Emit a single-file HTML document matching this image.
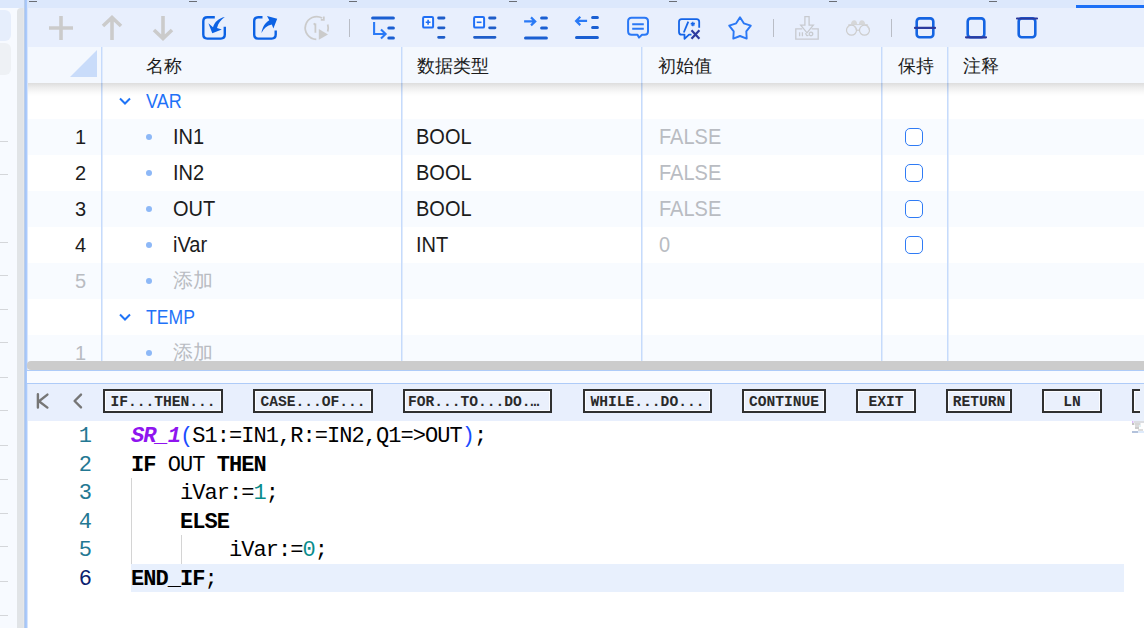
<!DOCTYPE html>
<html><head><meta charset="utf-8">
<style>
*{margin:0;padding:0;box-sizing:border-box}
html,body{width:1144px;height:628px;overflow:hidden;background:#fff;font-family:"Liberation Sans",sans-serif}
.a{position:absolute}
#topstrip{left:0;top:0;width:1144px;height:8px;background:#dce8fc}
.dash{top:1px;width:8px;height:1px;background:#6a6e75}
#uline{left:1076px;top:5px;width:68px;height:3px;background:#1c70f7}
#leftp{left:0;top:8px;width:25px;height:620px;background:#f7faff}
#vline{left:24px;top:0;width:4px;height:628px;z-index:9;background:linear-gradient(to right,#b9cde9 0 1px,#a6c5f6 1px 2px,#abcafc 2px 3px,#d6e5fc 3px 4px)}
#sb{left:17px;top:8px;width:7px;height:620px;background:linear-gradient(to right,#e1e4e7 0 6px,#e6e7ea 6px 7px);border-radius:4px 0 0 0}
.tick{left:0;width:8px;height:1px;background:#d4d6da}
#tb{left:27px;top:8px;width:1117px;height:39px;background:#e8effd}
#hdr{left:27px;top:47px;width:1117px;height:36px;background:#f4f8fe;z-index:2}
.row{left:27px;width:1117px;height:36px}
.lt{background:#f8fbff}
.col{top:47px;width:2px;height:314px;background:linear-gradient(to right,#c6dbfc 50%,#e0ebfc 50%);z-index:3}
.t{font-size:20px;line-height:20px;color:#1c1c1c;white-space:nowrap}
.lat{font-size:22px;transform:scaleX(0.909);transform-origin:0 0}
.cjk{font-size:18px}
#split{left:26.5px;top:361px;width:1118px;height:9px;background:#cccccc;border-radius:4px 0 0 4px;z-index:10}
#gap{left:27px;top:370px;width:1117px;height:14px;z-index:10;background:#f9fbff;border-top:1px solid #aecbf8;border-bottom:1px solid #aecbf8}
#ctb{left:27px;top:384px;width:1117px;height:37px;background:#e8effd}
.btn{top:389px;height:24px;border:2px solid #303030;background:#eaf0fc;font-family:"Liberation Mono",monospace;font-weight:bold;font-size:14.6px;line-height:22px;color:#2a2a2a;text-align:center;white-space:nowrap;overflow:hidden;text-overflow:ellipsis;padding:0 3px;box-shadow:inset 0 0 0 1px rgba(255,255,255,0.85)}
#code{left:27px;top:421px;width:1117px;height:207px;background:#fff}
.ln{left:40px;padding-top:2px;width:51px;text-align:right;font-family:"Liberation Mono",monospace;font-size:22px;letter-spacing:-0.95px;height:28.6px;line-height:28.6px;color:#237893}
.cl{left:131px;padding-top:2px;font-family:"Liberation Mono",monospace;font-size:22px;letter-spacing:-0.95px;height:28.6px;line-height:28.6px;color:#000;white-space:pre}
.num{left:40px;width:46px;text-align:right}
.gr{color:#b9bcc2}
.dot{left:146px;width:6px;height:6px;border-radius:3px;background:#8db8f7}
.cb{left:905px;width:18px;height:18px;border:1.5px solid #2f7bf5;border-radius:5px;background:#fff}
</style></head><body>
<div id="topstrip" class="a"></div>
<div class="a dash" style="left:29px"></div>
<div class="a dash" style="left:189px"></div>
<div class="a dash" style="left:349px"></div>
<div class="a dash" style="left:509px"></div>
<div class="a dash" style="left:669px"></div>
<div class="a dash" style="left:829px"></div>
<div class="a dash" style="left:989px"></div>
<div id="uline" class="a"></div>

<div id="leftp" class="a"></div>
<div class="a" style="left:0;top:10px;width:11px;height:31px;background:#e6eefc;border-radius:0 6px 6px 0"></div>
<div class="a" style="left:0;top:43px;width:11px;height:32px;background:#eef1f5;border-radius:0 6px 6px 0"></div>
<div class="a tick" style="top:141px"></div><div class="a tick" style="top:174px"></div><div class="a tick" style="top:242px"></div><div class="a tick" style="top:275px"></div><div class="a tick" style="top:309px"></div><div class="a tick" style="top:342px"></div><div class="a tick" style="top:377px"></div><div class="a tick" style="top:410px"></div><div class="a tick" style="top:445px"></div><div class="a tick" style="top:479px"></div><div class="a tick" style="top:513px"></div><div class="a tick" style="top:546px"></div><div class="a tick" style="top:581px"></div><div class="a tick" style="top:615px"></div>
<div id="sb" class="a"></div>
<div id="vline" class="a"></div>

<div id="tb" class="a"></div>
<svg class="a" style="left:0;top:0;z-index:6" width="1144" height="50" viewBox="0 0 1144 50">
<g fill="none" stroke="#cbcbcb" stroke-width="3.6">
<path d="M49 28H73M61 16V40"/>
<path d="M112 17.5V40M103 26L112 17.5L121 26"/>
<path d="M163 16V38.5M154 30L163 38.5L172 30"/>
</g>
<g fill="none" stroke="#0c62e4" stroke-width="2.4" stroke-linecap="butt">
<path d="M214.8 17.3H207.3Q203.3 17.3 203.3 21.3V34.6Q203.3 38.6 207.3 38.6H220.8Q224.8 38.6 224.8 34.6V26.8"/>
<path d="M262.5 17.2H258.2Q254.2 17.2 254.2 21.2V34.6Q254.2 38.6 258.2 38.6H271.7Q275.7 38.6 275.7 34.6V30.4"/>
</g>
<g fill="#0c62e4">
<path d="M224.8 17C218.5 18.3 214.5 22 213 27.3L208.4 23.2L212.3 33.2L221.8 29.4L217 27.9C218.3 23.2 220.8 19.8 224.8 17Z"/>
<path d="M261.5 33C262.3 27.3 265.2 22.6 269.3 20.3L267 16L277.2 18.8L273.4 28.4L271.8 24.6C267.3 25.4 263.8 28.5 261.5 33Z"/>
</g>
<g fill="none" stroke="#cbcbcb" stroke-width="1.8">
<path d="M322.1 18A11.4 11.4 0 1 0 316.3 39.4"/>
<path d="M327.7 24.6A11.7 11.7 0 0 1 327.7 31.4"/>
<path d="M320.8 19.8H323.8V16.6"/>
<path d="M315.4 23.6V32.8M313.6 24.6L315.4 23.4"/>
</g>
<path d="M318.8 29V39.8L328 34.4Z" fill="#cbcbcb"/>
<g fill="#b9bdc6"><rect x="349" y="19" width="1" height="18"/><rect x="773" y="19" width="1" height="18"/><rect x="891" y="19" width="1" height="18"/></g>
<g fill="none" stroke-linecap="round">
<path d="M372.6 17.9H393.4M388.8 27.9H393.4M388.8 37.9H393.4" stroke="#1a5fd2" stroke-width="3"/>
<path d="M374.1 22V34H385.8M381 29.6L385.6 34L381 38.4" stroke="#2a7af6" stroke-width="2.1" stroke-linecap="butt"/>
<path d="M438.6 18H444M438.6 27.8H444M438.6 37.3H444" stroke="#1e5dc9" stroke-width="2.8"/>
<rect x="423.1" y="17.1" width="10" height="10.5" rx="1.2" stroke="#1f6ff5" stroke-width="2" fill="#f6f9ff"/>
<path d="M425.7 22.3H430.5M428.1 19.8V24.8" stroke="#1f6ff5" stroke-width="1.6" stroke-linecap="butt"/>
<path d="M489.6 18H495M489.6 27.8H495M474.5 37.3H495" stroke="#1e5dc9" stroke-width="2.8"/>
<rect x="474.1" y="17.1" width="10" height="10.5" rx="1.2" stroke="#1f6ff5" stroke-width="2" fill="#f6f9ff"/>
<path d="M476.7 22.3H481.5" stroke="#1f6ff5" stroke-width="1.6" stroke-linecap="butt"/>
<path d="M541.6 17.9H546.4M541.6 28.1H546.4M525.5 38H546.4" stroke="#1a5fd2" stroke-width="3"/>
<path d="M524.1 21.4H535M531 17.4L535.2 21.4L531 25.4" stroke="#2a7af6" stroke-width="2.2" stroke-linecap="butt"/>
<path d="M592.6 17.5H597.4M592.6 27.5H597.4M576.5 37.5H597.4" stroke="#1a5fd2" stroke-width="3"/>
<path d="M587.1 20.9H576.2M580.3 16.7L576.1 20.9L580.3 25.1" stroke="#2a7af6" stroke-width="2.2" stroke-linecap="butt"/>
</g>
<g fill="none" stroke="#2a78f5" stroke-width="2" stroke-linejoin="round">
<path d="M631.6 17.8H644.5Q648 17.8 648 21.3V31.2Q648 34.7 644.5 34.7H642L639 37.6L637.5 34.7H631.6Q628.1 34.7 628.1 31.2V21.3Q628.1 17.8 631.6 17.8Z"/>
<path d="M632.2 24.2H643.8M632.2 28.8H643.8" stroke-width="1.9"/>
</g>
<g fill="none" stroke="#1565e8" stroke-width="1.8" stroke-linejoin="round">
<path d="M699.2 27.8V21.8Q699.2 19.2 696.6 19.2H681.6Q679 19.2 679 21.8V31.9Q679 34.6 681.6 34.6H684.5L684.5 38.8L689 34.6H691.5"/>
<path d="M688.3 21.6L683.8 32.5"/>
<path d="M692.8 21.8V26.2M690.8 23.1L694.8 25M694.8 23.1L690.8 25" stroke-width="1.3"/>
</g>
<path d="M691.5 30.2L699.4 38.8M699.4 30.2L691.5 38.8" stroke="#2e3a9f" stroke-width="2.2" fill="none"/>
<path d="M740 17.2L743.8 23.3L750.8 25.6L746.3 31.3L746.7 38.6L740 36L733.3 38.6L733.7 31.3L729.2 25.6L736.2 23.3Z" fill="none" stroke="#2a78f5" stroke-width="1.9" stroke-linejoin="round"/>
<g fill="none" stroke="#c7cacf" stroke-width="1.3">
<path d="M804.9 16.6H809.1V25.2H813.3L807 32.8L800.7 25.2H804.9Z"/>
<path d="M802.3 28.9H795.8V39.2H818.2V28.9H811.6"/>
<path d="M799.6 32.3V36.2M802.4 32.3V36.2M805.6 33.2Q806.5 36.5 808.4 35.2M812.8 33.9A1.8 1.8 0 1 0 812.8 34"/>
</g>
<g fill="none" stroke="#cdcdcd" stroke-width="1.2">
<circle cx="851.5" cy="30.2" r="5"/><circle cx="864.5" cy="30.2" r="5"/>
<path d="M856.5 30.2H859.5"/>
</g>
<path d="M850.8 24.4Q851.5 20.2 854.2 20.2Q856.8 20.2 857.2 24.4ZM858.9 24.4Q859.3 20.2 861.9 20.2Q864.6 20.2 865.3 24.4Z" fill="#d6d7d9"/>
<path d="M848.6 27.3V24.6H867.6V27.3M854.2 26.6Q856 27.8 856.2 30M867.2 26.6Q869 27.8 869.2 30" fill="none" stroke="#d2d3d5" stroke-width="1"/>
<g fill="none" stroke="#1464e2" stroke-width="2.6">
<rect x="916.7" y="18.4" width="16.6" height="18.8" rx="3"/>
<rect x="967.7" y="18.4" width="16.6" height="18.8" rx="3"/>
<rect x="1018.7" y="18.4" width="16.6" height="18.8" rx="3"/>
</g>
<g fill="none" stroke="#2c3a9d" stroke-width="2.2" stroke-linecap="round">
<path d="M915 27.9H935M966 37.3H986M1017 18.5H1037"/>
</g>
</svg>
<div id="hdr" class="a"></div>
<div class="a row" style="top:83px"></div>
<div class="a row lt" style="top:119px"></div>
<div class="a row" style="top:155px"></div>
<div class="a row lt" style="top:191px"></div>
<div class="a row" style="top:227px"></div>
<div class="a row lt" style="top:263px"></div>
<div class="a row" style="top:299px"></div>
<div class="a row lt" style="top:335px"></div>

<div class="a" style="left:27px;top:83px;width:1117px;height:13px;z-index:4;background:linear-gradient(rgba(0,0,0,0.135),rgba(0,0,0,0.07) 35%,rgba(0,0,0,0.02) 75%,rgba(0,0,0,0))"></div>
<div class="a col" style="left:101px"></div>
<div class="a col" style="left:401px"></div>
<div class="a col" style="left:641px"></div>
<div class="a col" style="left:881px"></div>
<div class="a col" style="left:947px"></div>


<div class="a" style="left:70px;top:50px;width:0;height:0;border-left:27px solid transparent;border-bottom:27px solid #c9dcfa;z-index:5"></div>
<div class="a t cjk" style="left:146px;top:56px;z-index:5">名称</div>
<div class="a t cjk" style="left:417px;top:56px;z-index:5">数据类型</div>
<div class="a t cjk" style="left:658px;top:56px;z-index:5">初始值</div>
<div class="a t cjk" style="left:898px;top:56px;z-index:5">保持</div>
<div class="a t cjk" style="left:963px;top:56px;z-index:5">注释</div>

<svg class="a" style="left:118px;top:96px" width="14" height="10"><path d="M2 2.5L7 7.5L12 2.5" fill="none" stroke="#1f74f7" stroke-width="2"/></svg>
<div class="a t" style="left:146px;top:91px;color:#1f72f8;transform:scaleX(0.9);transform-origin:0 0">VAR</div>

<div class="a t num" style="top:127px">1</div><div class="a dot" style="top:134px"></div>
<div class="a t lat" style="left:173px;top:127px">IN1</div>
<div class="a t lat" style="left:416px;top:127px">BOOL</div>
<div class="a t lat gr" style="left:659px;top:127px">FALSE</div>
<div class="a cb" style="top:128px"></div>

<div class="a t num" style="top:163px">2</div><div class="a dot" style="top:170px"></div>
<div class="a t lat" style="left:173px;top:163px">IN2</div>
<div class="a t lat" style="left:416px;top:163px">BOOL</div>
<div class="a t lat gr" style="left:659px;top:163px">FALSE</div>
<div class="a cb" style="top:164px"></div>

<div class="a t num" style="top:199px">3</div><div class="a dot" style="top:206px"></div>
<div class="a t lat" style="left:173px;top:199px">OUT</div>
<div class="a t lat" style="left:416px;top:199px">BOOL</div>
<div class="a t lat gr" style="left:659px;top:199px">FALSE</div>
<div class="a cb" style="top:200px"></div>

<div class="a t num" style="top:235px">4</div><div class="a dot" style="top:242px"></div>
<div class="a t lat" style="left:173px;top:235px">iVar</div>
<div class="a t lat" style="left:416px;top:235px">INT</div>
<div class="a t lat gr" style="left:659px;top:235px">0</div>
<div class="a cb" style="top:236px"></div>

<div class="a t num gr" style="top:271px">5</div><div class="a dot" style="top:278px"></div>
<div class="a t gr" style="left:173px;top:270px;font-size:20px">添加</div>

<svg class="a" style="left:118px;top:312px" width="14" height="10"><path d="M2 2.5L7 7.5L12 2.5" fill="none" stroke="#1f74f7" stroke-width="2"/></svg>
<div class="a t" style="left:146px;top:307px;color:#1f72f8;transform:scaleX(0.88);transform-origin:0 0">TEMP</div>

<div class="a t num gr" style="top:343px">1</div><div class="a dot" style="top:350px"></div>
<div class="a t gr" style="left:173px;top:342px;font-size:20px">添加</div>

<div id="split" class="a"></div>
<div id="gap" class="a"></div>
<div id="ctb" class="a"></div>
<div id="code" class="a"></div>

<svg class="a" style="left:0;top:380px;z-index:6" width="100" height="40" viewBox="0 380 100 40">
<g fill="none" stroke="#767676" stroke-width="2.4" stroke-linecap="round" stroke-linejoin="round">
<path d="M37.9 394.2V407.6M47.4 394.6L39 401.2L47.4 407.6"/>
<path d="M81 394.6L74.6 401L81 407.4"/>
</g>
</svg>
<div class="a btn" style="left:103px;width:120px">IF...THEN...</div>
<div class="a btn" style="left:253px;width:120px">CASE...OF...</div>
<div class="a btn" style="left:403px;width:149px">FOR...TO...DO...</div>
<div class="a btn" style="left:583px;width:129px">WHILE...DO...</div>
<div class="a btn" style="left:742px;width:84px">CONTINUE</div>
<div class="a btn" style="left:856px;width:60px">EXIT</div>
<div class="a btn" style="left:946px;width:66px">RETURN</div>
<div class="a btn" style="left:1042px;width:60px">LN</div>
<div class="a btn" style="left:1132px;width:60px;border-right:none"></div>
<div class="a" style="left:1140px;top:384px;width:4px;height:37px;background:#e9f0fc;z-index:7"></div>

<div class="a" style="left:131px;top:564px;width:993px;height:28px;background:#e8f0fd"></div>
<div class="a" style="left:131px;top:478px;width:1px;height:86px;background:#d4d4d4"></div>
<div class="a" style="left:181px;top:535px;width:1px;height:29px;background:#d4d4d4"></div>

<div class="a ln" style="top:421px">1</div>
<div class="a ln" style="top:449.6px">2</div>
<div class="a ln" style="top:478.2px">3</div>
<div class="a ln" style="top:506.8px">4</div>
<div class="a ln" style="top:535.4px">5</div>
<div class="a ln" style="top:564px;color:#0b216f">6</div>

<div class="a cl" style="top:421px"><b><i style="color:#8f14ef">SR_1</i></b><span style="color:#1a4cff">(</span>S1:=IN1,R:=IN2,Q1=&gt;OUT<span style="color:#1a4cff">)</span>;</div>
<div class="a cl" style="top:449.6px"><b>IF</b> OUT <b>THEN</b></div>
<div class="a cl" style="top:478.2px">    iVar:=<span style="color:#098c8c">1</span>;</div>
<div class="a cl" style="top:506.8px">    <b>ELSE</b></div>
<div class="a cl" style="top:535.4px">        iVar:=<span style="color:#098c8c">0</span>;</div>
<div class="a cl" style="top:564px"><b>END_IF</b>;</div>
<svg class="a" style="left:1131px;top:421px;z-index:8" width="13" height="13" viewBox="0 0 13 13">
<rect x="1" y="0.5" width="1.5" height="1" fill="#b070f0"/><rect x="3" y="0.5" width="10" height="1" fill="#b8bcc4"/>
<rect x="1" y="2.5" width="2" height="1" fill="#888"/><rect x="3.5" y="2.5" width="6" height="1" fill="#b0b0b0"/>
<rect x="4" y="4.5" width="4" height="1" fill="#b8b8b8"/><rect x="8.5" y="4.5" width="1" height="1" fill="#8cd"/>
<rect x="4" y="6.5" width="4" height="1" fill="#999"/>
<rect x="7" y="8.5" width="5" height="1" fill="#bbb"/>
<rect x="1" y="10.2" width="12" height="1.6" fill="#d8e6fa"/><rect x="1" y="10.5" width="6" height="1" fill="#8899bb"/>
</svg>
</body></html>
